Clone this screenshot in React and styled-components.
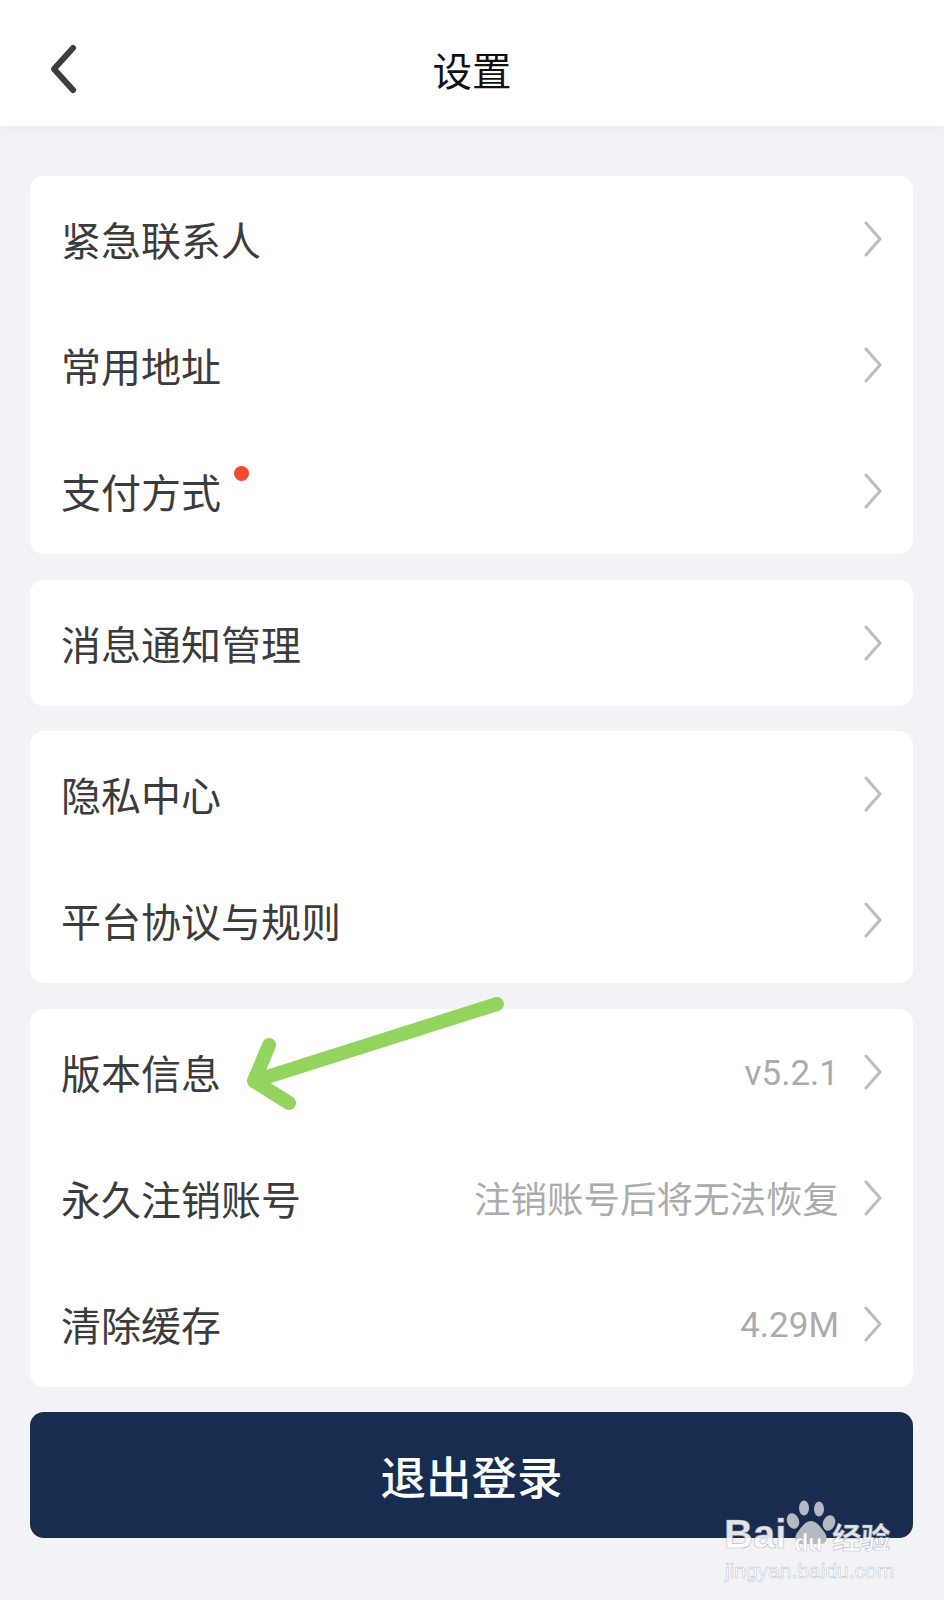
import React from 'react';
import styled, { createGlobalStyle } from 'styled-components';

const PAGEBG = '#f2f3f7';
const TEXT = '#3c3c3c';
const GREY = '#ababab';
const NAVY = '#182c4f';
const CJK = '"Noto Sans CJK SC", "Noto Sans", sans-serif';
const MARK = 'rgba(255, 255, 255, 0.88)';
const MARKLINE = 'rgba(165, 170, 180, 0.75)';

const GlobalStyle = createGlobalStyle`
  html, body {
    margin: 0;
    padding: 0;
    background: ${PAGEBG};
    font-family: ${CJK};
  }
`;

const Page = styled.div`
  position: relative;
  width: 944px;
  height: 1600px;
  overflow: hidden;
  background: ${PAGEBG};
`;

const Header = styled.header`
  height: 126px;
  display: grid;
  grid-template-columns: 1fr auto 1fr;
  align-items: center;
  background: #fff;
  box-shadow: 0 3px 16px rgba(60, 70, 90, 0.05);
`;

const BackIcon = styled.svg`
  width: 36px;
  height: 52px;
  margin: 12px 0 0 46px;
`;

const Title = styled.h1`
  margin: 12px 0 0;
  font-size: 39.5px;
  line-height: 56px;
  font-weight: 400;
  color: #111;
`;

const Content = styled.main`
  padding: 50px 31px 0 30px;
  display: flex;
  flex-direction: column;
  gap: 25.5px;
`;

const Card = styled.section`
  background: #fff;
  border-radius: 14px;
`;

const Row = styled.div`
  height: 126px;
  padding: 0 30px 0 31px;
  display: flex;
  align-items: center;
`;

const Label = styled.span`
  position: relative;
  font-size: 40px;
  line-height: 56px;
  color: ${TEXT};
`;

const Dot = styled.i`
  position: absolute;
  right: -28px;
  top: 3px;
  width: 15px;
  height: 15px;
  border-radius: 50%;
  background: #f04a30;
`;

const Value = styled.span`
  margin-left: auto;
  margin-right: 24px;
  padding-top: ${p => (p.$latin ? '5px' : '0')};
  font-family: ${p => (p.$latin ? 'Roboto, sans-serif' : CJK)};
  font-size: ${p => (p.$latin ? '35px' : '36.5px')};
  line-height: 50px;
  color: ${GREY};
`;

const ChevronIcon = styled.svg`
  width: 20px;
  height: 36px;
  margin-left: ${p => (p.$alone ? 'auto' : '0')};
`;

const LogoutButton = styled.button`
  height: 126px;
  border: 0;
  border-radius: 14px;
  background: ${NAVY};
  color: #fff;
  font-family: ${CJK};
  font-size: 45.5px;
  font-weight: 500;
`;

const ArrowMark = styled.svg`
  position: absolute;
  left: 240px;
  top: 995px;
  width: 270px;
  height: 125px;
`;

const Watermark = styled.div`
  position: absolute;
  left: 724px;
  top: 1498px;
  width: 176px;
  display: flex;
  flex-direction: column;
  color: ${MARK};
`;

const BrandRow = styled.div`
  height: 58px;
  display: flex;
  align-items: flex-end;
`;

const Brand = styled.span`
  font-family: "Liberation Sans", sans-serif;
  font-size: 40px;
  line-height: 44px;
  font-weight: 700;
  -webkit-text-stroke: 0.7px ${MARKLINE};
`;

const PawBox = styled.span`
  position: relative;
  width: 50px;
  height: 58px;
  flex: none;
`;

const PawIcon = styled.svg`
  width: 50px;
  height: 44px;
  margin-top: 2px;
  display: block;
`;

const PawDu = styled.span`
  position: absolute;
  left: 8px;
  bottom: 1px;
  font-family: "Liberation Sans", sans-serif;
  font-size: 23px;
  line-height: 24px;
  font-weight: 700;
  color: #fff;
  -webkit-text-stroke: 0.5px ${MARKLINE};
`;

const BrandCn = styled.span`
  margin-left: -4px;
  font-size: 29px;
  line-height: 40px;
  font-weight: 700;
  -webkit-text-stroke: 0.7px ${MARKLINE};
`;

const Site = styled.span`
  padding-left: 1px;
  margin-top: 3px;
  font-family: "Liberation Sans", sans-serif;
  font-size: 21px;
  line-height: 24px;
  white-space: nowrap;
  -webkit-text-stroke: 0.5px ${MARKLINE};
`;

const Chevron = ({ alone }) => (
  <ChevronIcon $alone={alone} viewBox="0 0 20 36" fill="none">
    <path d="M3 2 L17 18 L3 34" stroke="#bcbcbc" strokeWidth="3" strokeLinecap="round" strokeLinejoin="round" />
  </ChevronIcon>
);

const Item = ({ label, value, latin, dot }) => (
  <Row>
    <Label>
      {label}
      {dot && <Dot />}
    </Label>
    {value && <Value $latin={latin}>{value}</Value>}
    <Chevron alone={!value} />
  </Row>
);

export default function App() {
  return (
    <Page>
      <GlobalStyle />
      <Header>
        <BackIcon viewBox="0 0 36 52" fill="none">
          <path d="M27 5 L8 26 L27 47" stroke="#3d3d3d" strokeWidth="6" strokeLinecap="round" strokeLinejoin="round" />
        </BackIcon>
        <Title>设置</Title>
      </Header>
      <Content>
        <Card>
          <Item label="紧急联系人" />
          <Item label="常用地址" />
          <Item label="支付方式" dot />
        </Card>
        <Card>
          <Item label="消息通知管理" />
        </Card>
        <Card>
          <Item label="隐私中心" />
          <Item label="平台协议与规则" />
        </Card>
        <Card>
          <Item label="版本信息" value="v5.2.1" latin />
          <Item label="永久注销账号" value="注销账号后将无法恢复" />
          <Item label="清除缓存" value="4.29M" latin />
        </Card>
        <LogoutButton>退出登录</LogoutButton>
      </Content>
      <ArrowMark viewBox="0 0 270 125" fill="none">
        <path d="M257 9 L14 86 M29 50 L14 86 L49 108" stroke="#93d45f" strokeWidth="14" strokeLinecap="round" strokeLinejoin="round" />
      </ArrowMark>
      <Watermark>
        <BrandRow>
          <Brand>Bai</Brand>
          <PawBox>
            <PawIcon viewBox="0 0 50 44" fill="#b5b9c2">
              <ellipse cx="7" cy="21" rx="6" ry="8" transform="rotate(-20 7 21)" />
              <ellipse cx="18" cy="8" rx="5" ry="7.5" />
              <ellipse cx="33" cy="9" rx="5" ry="7.5" />
              <ellipse cx="43" cy="23" rx="6" ry="8" transform="rotate(20 43 23)" />
              <path d="M25 21 C19 21 15 28 11 33 C8 38 9 44 16 44 L34 44 C41 44 42 38 39 33 C35 28 31 21 25 21 Z" />
            </PawIcon>
            <PawDu>du</PawDu>
          </PawBox>
          <BrandCn>经验</BrandCn>
        </BrandRow>
        <Site>jingyan.baidu.com</Site>
      </Watermark>
    </Page>
  );
}
